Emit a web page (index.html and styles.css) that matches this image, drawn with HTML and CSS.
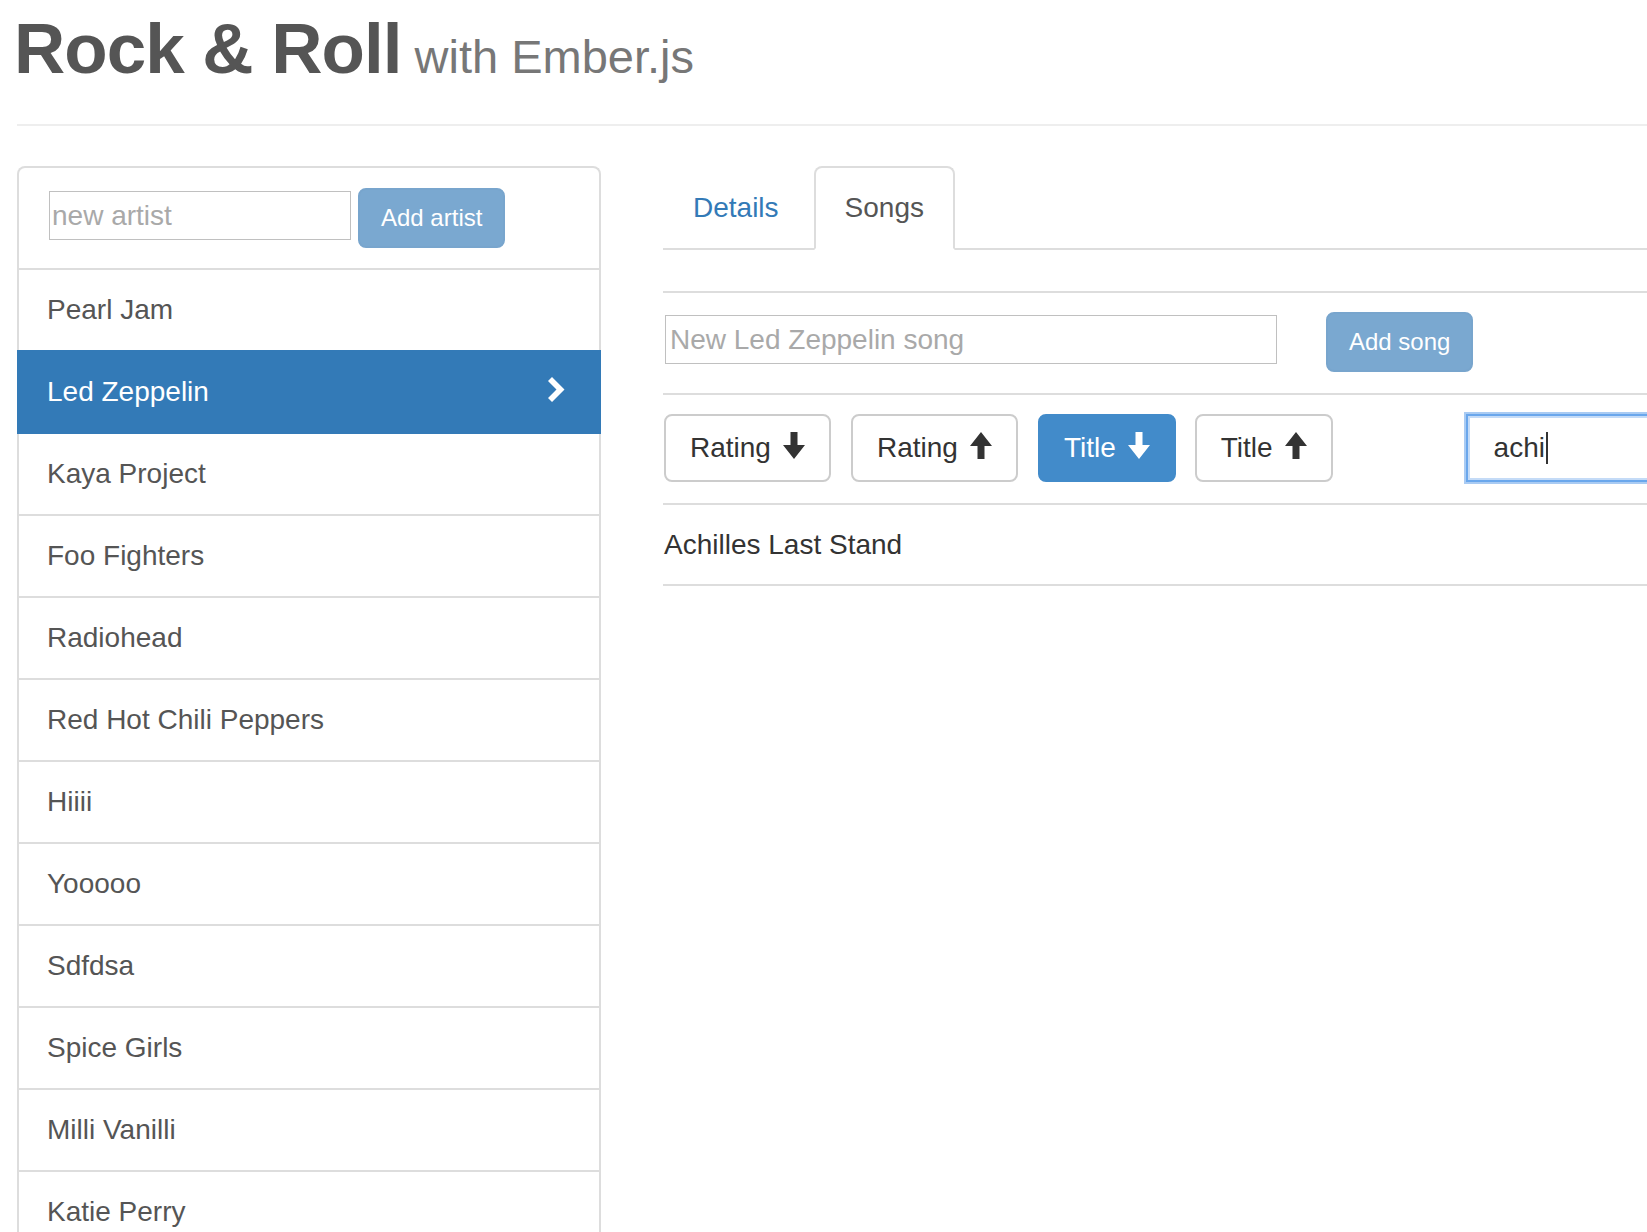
FILE: index.html
```html
<!DOCTYPE html>
<html lang="en">
<head>
<meta charset="utf-8">
<title>Rock &amp; Roll with Ember.js</title>
<link rel="stylesheet" href="styles.css">
</head>
<body>
<div class="page">
  <header class="page-header">
    <h1 class="title">Rock &amp; Roll<small class="subtitle"> with Ember.js</small></h1>
  </header>
  <div class="main">
    <aside class="panel">
      <div class="panel-head">
        <input class="text-input new-artist" type="text" placeholder="new artist">
        <button class="btn-add" type="button">Add artist</button>
      </div>
      <ul class="artists">
        <li class="artist">Pearl Jam</li>
        <li class="artist active"><span>Led Zeppelin</span>
          <svg class="chevron" width="17" height="25" viewBox="0 0 17 25"><polygon points="4,0 16.5,12.5 4,25 0,21 8.5,12.5 0,4" fill="#fff"/></svg>
        </li>
        <li class="artist">Kaya Project</li>
        <li class="artist">Foo Fighters</li>
        <li class="artist">Radiohead</li>
        <li class="artist">Red Hot Chili Peppers</li>
        <li class="artist">Hiiii</li>
        <li class="artist">Yooooo</li>
        <li class="artist">Sdfdsa</li>
        <li class="artist">Spice Girls</li>
        <li class="artist">Milli Vanilli</li>
        <li class="artist">Katie Perry</li>
      </ul>
    </aside>
    <section class="content">
      <ul class="tabs">
        <li class="tab"><a class="tab-link">Details</a></li>
        <li class="tab current"><a class="tab-link">Songs</a></li>
      </ul>
      <ul class="songs">
        <li class="row row-new">
          <input class="text-input new-song" type="text" placeholder="New Led Zeppelin song">
          <button class="btn-add" type="button">Add song</button>
        </li>
        <li class="row row-sort">
          <button class="btn-sort first" type="button">Rating<svg class="arrow" width="22" height="27" viewBox="0 0 22 27"><path d="M7.5 0H14.5V13H22L11 27L0 13H7.5Z"/></svg></button>
          <button class="btn-sort" type="button">Rating<svg class="arrow" width="22" height="27" viewBox="0 0 22 27"><path d="M11 0L22 14H14.5V27H7.5V14H0Z"/></svg></button>
          <button class="btn-sort selected" type="button">Title<svg class="arrow" width="22" height="27" viewBox="0 0 22 27"><path d="M7.5 0H14.5V13H22L11 27L0 13H7.5Z"/></svg></button>
          <button class="btn-sort" type="button">Title<svg class="arrow" width="22" height="27" viewBox="0 0 22 27"><path d="M11 0L22 14H14.5V27H7.5V14H0Z"/></svg></button>
          <div class="search"><span class="search-text">achi</span><span class="caret"></span></div>
        </li>
        <li class="row row-song">Achilles Last Stand</li>
      </ul>
    </section>
  </div>
</div>
</body>
</html>
```
FILE: styles.css
```css
* { box-sizing: border-box; }

html, body {
  margin: 0;
  padding: 0;
  background: #fff;
}

body {
  font-family: "Liberation Sans", Arial, sans-serif;
  font-size: 28px;
  line-height: 40px;
  color: #333;
  overflow: hidden;
}

.page {
  width: 1647px;
  height: 1232px;
  padding-left: 17px;
  overflow: hidden;
}

/* header */
.page-header {
  padding-top: 9px;
  border-bottom: 2px solid #eee;
}

.title {
  margin: 0 0 35px -3px;
  font-size: 71px;
  line-height: 80px;
  font-weight: bold;
  letter-spacing: -1px;
  color: #555;
  white-space: nowrap;
}

.subtitle {
  font-size: 47px;
  line-height: 1;
  font-weight: normal;
  letter-spacing: 0;
  color: #777;
}

/* layout */
.main {
  display: flex;
  align-items: flex-start;
  margin-top: 40px;
}

/* left panel */
.panel {
  flex: none;
  width: 584px;
  border: 2px solid #ddd;
  border-bottom: none;
  border-radius: 8px 8px 0 0;
}

.panel-head {
  display: flex;
  align-items: flex-start;
  padding: 20px 30px;
  border-bottom: 2px solid #ddd;
}

.text-input {
  font-family: inherit;
  font-size: 28px;
  color: #333;
  border: 1px solid #c0c0c0;
  border-radius: 0;
  background: #fff;
  padding: 0 2px;
  outline: none;
}

.text-input::placeholder {
  color: #a9a9a9;
}

.new-artist {
  width: 302px;
  height: 49px;
  margin-top: 3px;
}

.btn-add {
  flex: none;
  height: 60px;
  padding: 0 21px;
  margin-left: 7px;
  font-family: inherit;
  font-size: 24px;
  color: #fff;
  background: #7aa8d0;
  border: 2px solid #78a5cd;
  border-radius: 8px;
}

.artists {
  list-style: none;
  margin: 0;
  padding: 0;
}

.artist {
  display: flex;
  justify-content: space-between;
  align-items: center;
  padding: 20px 30px 20px 28px;
  font-size: 28px;
  line-height: 40px;
  color: #555;
  border-bottom: 2px solid #ddd;
  white-space: nowrap;
}

.artist.active {
  margin: -2px -2px 0;
  padding: 22px 36px 20px 30px;
  background: #337ab7;
  color: #fff;
  border-bottom-color: #337ab7;
}

.chevron {
  flex: none;
  margin-top: -5px;
}

/* right content */
.content {
  flex: none;
  width: 1240px;
  margin-left: 62px;
}

.tabs {
  display: flex;
  list-style: none;
  margin: 0;
  padding: 0;
  border-bottom: 2px solid #ddd;
}

.tab {
  margin-bottom: -2px;
  margin-right: 4px;
}

.tab-link {
  display: block;
  padding: 20px 29px 20px 28px;
  line-height: 40px;
  font-size: 28px;
  color: #337ab7;
  border: 2px solid transparent;
  border-radius: 8px 8px 0 0;
}

.tab.current .tab-link {
  padding: 20px 29px;
  color: #555;
  background: #fff;
  border-color: #ddd #ddd #fff;
}

.songs {
  list-style: none;
  margin: 41px 0 0;
  padding: 0;
}

.row {
  border-top: 2px solid #ddd;
}

.row:last-child {
  border-bottom: 2px solid #ddd;
}

.row-new {
  display: flex;
  align-items: flex-start;
  padding: 19px 0 21px;
}

.new-song {
  width: 612px;
  height: 49px;
  margin: 3px 0 0 2px;
  padding: 0 4px;
}

.row-new .btn-add {
  margin-left: 49px;
}

.row-sort {
  display: flex;
  align-items: center;
  gap: 20px;
  padding: 19px 0 21px;
}

.btn-sort {
  flex: none;
  display: flex;
  align-items: center;
  height: 68px;
  padding: 0 24px;
  font-family: inherit;
  font-size: 28px;
  line-height: 40px;
  color: #333;
  background: #fff;
  border: 2px solid #ccc;
  border-radius: 8px;
}

.btn-sort.first {
  margin-left: 1px;
}

.btn-sort.selected {
  margin-right: -1px;
  color: #fff;
  background: #428bca;
  border-color: #428bca;
}

.arrow {
  flex: none;
  margin-left: 12px;
  margin-top: -5px;
  fill: #333;
}

.btn-sort.selected .arrow {
  fill: #fff;
}

.search {
  flex: none;
  display: flex;
  align-items: center;
  width: 400px;
  height: 68px;
  margin-left: 113px;
  padding-left: 26px;
  font-size: 28px;
  color: #333;
  border: 2px solid #6aa7ec;
  box-shadow: 0 0 0 2px #a9cbf3, inset 0 0 0 2px #c4dbf7;
}

.caret {
  display: inline-block;
  width: 2px;
  height: 32px;
  margin-left: 1px;
  background: #333;
}

.row-song {
  padding: 20px 0 19px 1px;
  font-size: 28px;
  line-height: 40px;
  color: #333;
}
```
